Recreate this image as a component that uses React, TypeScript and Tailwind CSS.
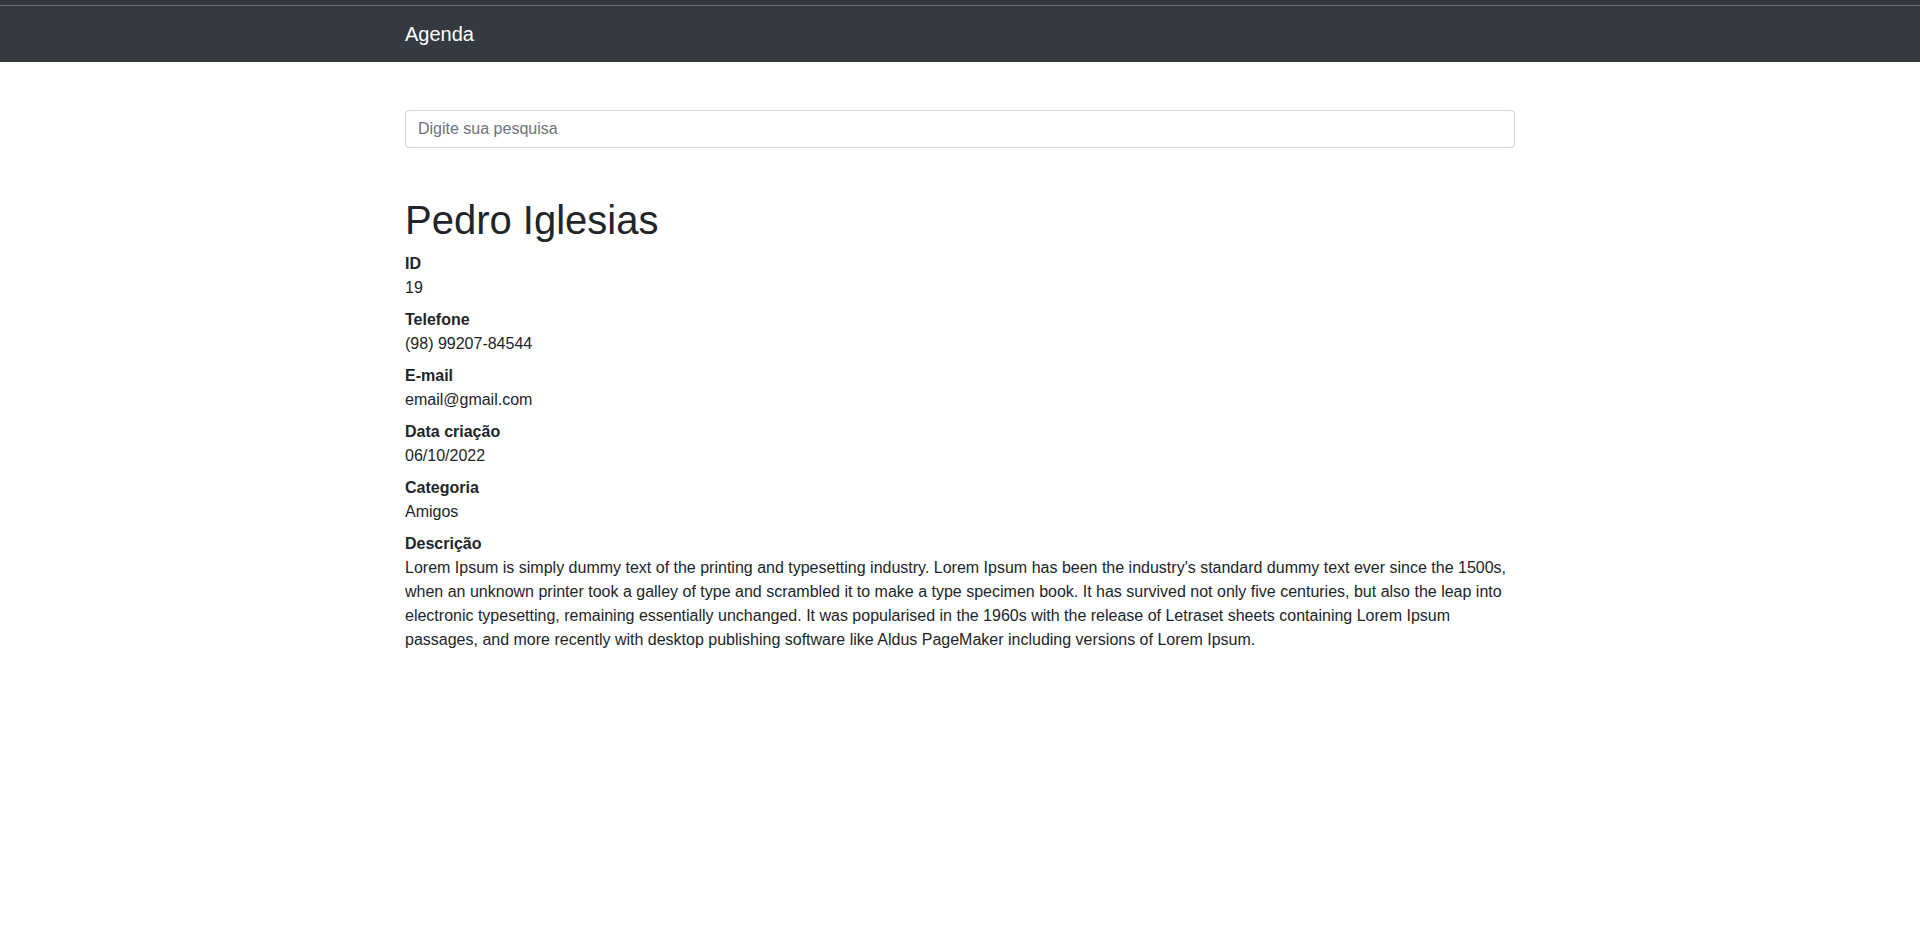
import React from "react";

const fields: [string, string][] = [
  ["ID", "19"],
  ["Telefone", "(98) 99207-84544"],
  ["E-mail", "email@gmail.com"],
  ["Data criação", "06/10/2022"],
  ["Categoria", "Amigos"],
  [
    "Descrição",
    "Lorem Ipsum is simply dummy text of the printing and typesetting industry. Lorem Ipsum has been the industry's standard dummy text ever since the 1500s, when an unknown printer took a galley of type and scrambled it to make a type specimen book. It has survived not only five centuries, but also the leap into electronic typesetting, remaining essentially unchanged. It was popularised in the 1960s with the release of Letraset sheets containing Lorem Ipsum passages, and more recently with desktop publishing software like Aldus PageMaker including versions of Lorem Ipsum.",
  ],
];

export default function App() {
  return (
    <div className="min-h-[950px] bg-white text-[#212529] text-base leading-6 font-['Liberation_Sans',Arial,sans-serif]">
      <div className="h-[5px] bg-[#33373d]" />
      <div className="h-px bg-[#6a6d72]" />
      <nav className="bg-[#343a40] py-2">
        <div className="w-[1140px] mx-auto px-[15px]">
          <span className="block text-white text-[20px] leading-[30px] py-[5px]">Agenda</span>
        </div>
      </nav>
      <main className="w-[1140px] mx-auto px-[15px]">
        <div className="mt-12">
          <input
            type="text"
            placeholder="Digite sua pesquisa"
            className="block w-full h-[38px] px-3 py-1.5 border border-[#ced4da] rounded-[4px] text-base text-[#495057] placeholder:text-[#6c757d] outline-none font-['Liberation_Sans',Arial,sans-serif]"
          />
        </div>
        <h1 className="mt-12 mb-2 text-[40px] leading-[48px] font-normal">Pedro Iglesias</h1>
        <dl>
          {fields.map(([k, v]) => (
            <React.Fragment key={k}>
              <dt className="font-bold">{k}</dt>
              <dd className="mb-2">{v}</dd>
            </React.Fragment>
          ))}
        </dl>
      </main>
    </div>
  );
}
